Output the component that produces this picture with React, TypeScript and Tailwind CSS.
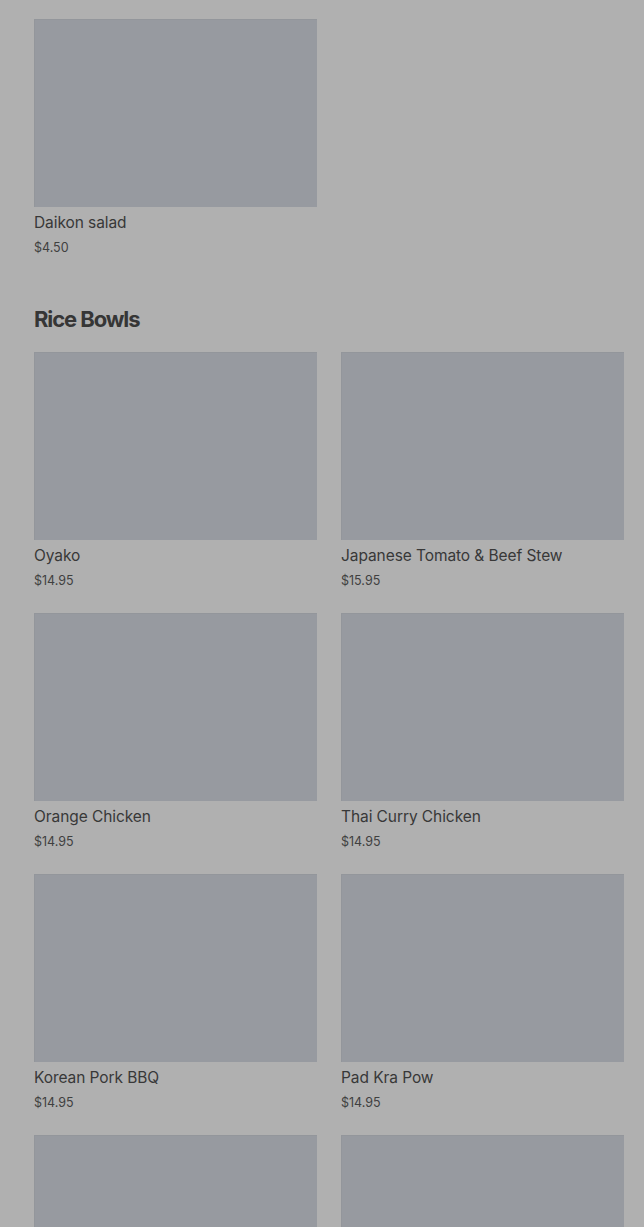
const riceBowls = [
  { name: "Oyako", price: "$14.95" },
  { name: "Japanese Tomato & Beef Stew", price: "$15.95" },
  { name: "Orange Chicken", price: "$14.95" },
  { name: "Thai Curry Chicken", price: "$14.95" },
  { name: "Korean Pork BBQ", price: "$14.95" },
  { name: "Pad Kra Pow", price: "$14.95" },
  { name: "", price: "" },
  { name: "", price: "" },
]

function MenuCard({ name, price }: { name: string; price: string }) {
  return (
    <div className="flex flex-col">
      <div className="h-[188px] w-full bg-[#979aa0] border-t border-l border-[#93969b]" />
      <div className="mt-[6px] text-[15.5px] leading-[20px] tracking-[-0.005em] text-[#383838]">{name}</div>
      <div className="mt-[5px] text-[12.5px] leading-[20px] text-[#404040]">{price}</div>
    </div>
  )
}

export default function App() {
  return (
    <div
      className="h-[1227px] overflow-hidden bg-[#b0b0b0] pl-[34px] pr-[20px] pt-[19px]"
      style={{ fontFamily: "Inter, 'Liberation Sans', sans-serif" }}
    >
      <div className="grid grid-cols-2 gap-x-[24px]">
        <MenuCard name="Daikon salad" price="$4.50" />
      </div>

      <h2 className="mt-[47px] mb-[19px] text-[22px] leading-[28px] font-bold tracking-[-0.05em] text-[#363636]">
        Rice Bowls
      </h2>

      <div className="grid grid-cols-2 gap-x-[24px] gap-y-[22px]">
        {riceBowls.map((item, i) => (
          <MenuCard key={i} name={item.name} price={item.price} />
        ))}
      </div>
    </div>
  )
}
